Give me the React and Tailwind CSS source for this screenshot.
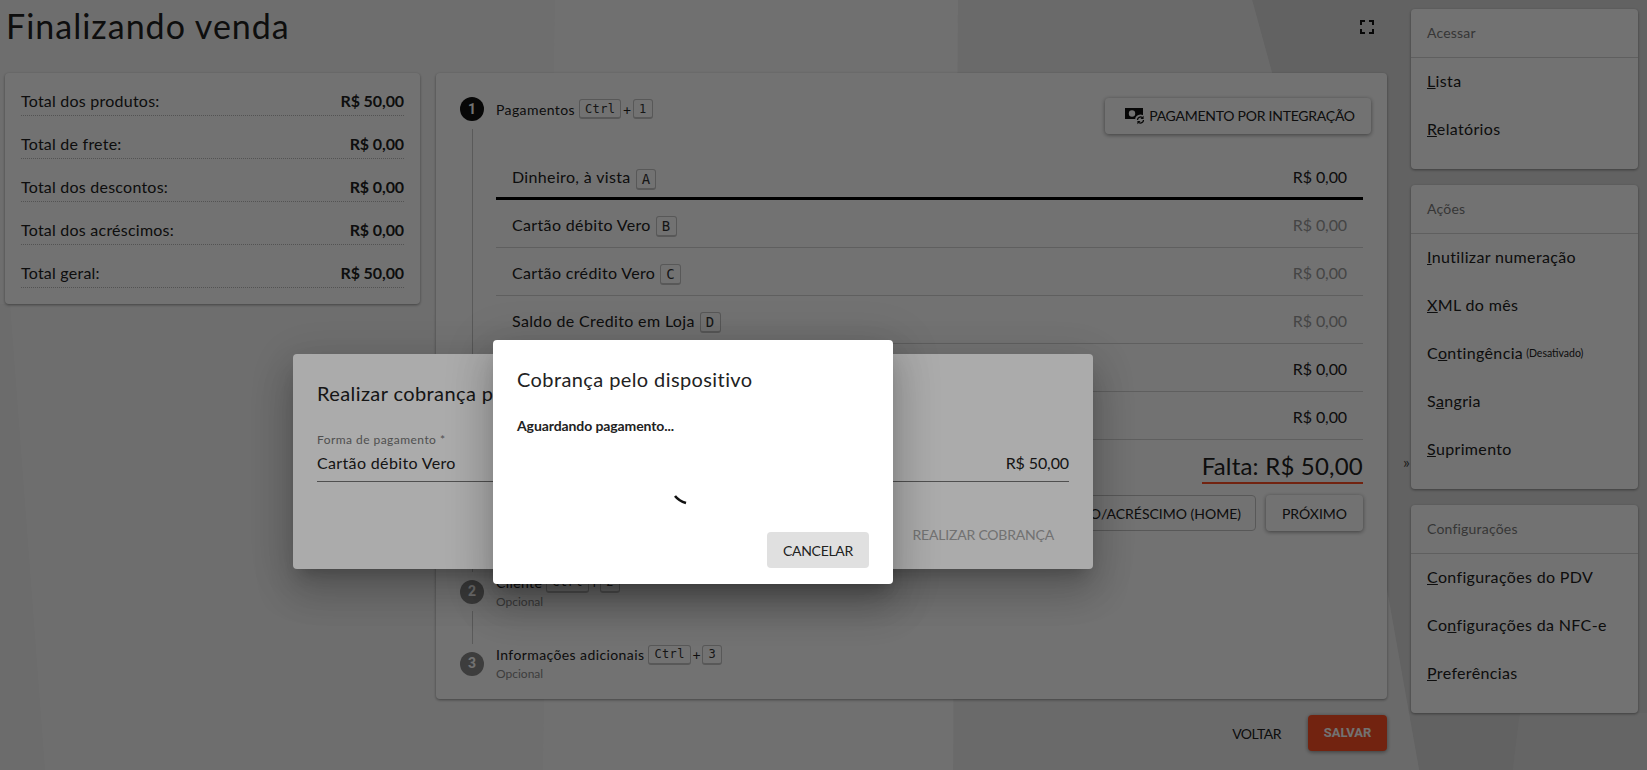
const sans = { fontFamily: 'Lato, "Noto Sans", sans-serif' };

const summary = [
  ['Total dos produtos:', 'R$ 50,00'],
  ['Total de frete:', 'R$ 0,00'],
  ['Total dos descontos:', 'R$ 0,00'],
  ['Total dos acréscimos:', 'R$ 0,00'],
  ['Total geral:', 'R$ 50,00'],
];

const payments = [
  { label: 'Dinheiro, à vista', key: 'A', active: true },
  { label: 'Cartão débito Vero', key: 'B', muted: true },
  { label: 'Cartão crédito Vero', key: 'C', muted: true },
  { label: 'Saldo de Credito em Loja', key: 'D', muted: true },
  {},
  {},
];

const menus = [
  {
    title: 'Acessar',
    pad: 'pb-[15px]',
    items: [['', 'L', 'ista'], ['', 'R', 'elatórios']],
  },
  {
    title: 'Ações',
    pad: 'pb-[15px]',
    items: [
      ['', 'I', 'nutilizar numeração'],
      ['', 'X', 'ML do mês'],
      ['C', 'o', 'ntingência', '(Desativado)'],
      ['S', 'a', 'ngria'],
      ['', 'S', 'uprimento'],
    ],
  },
  {
    title: 'Configurações',
    pad: 'pb-[15px]',
    items: [
      ['', 'C', 'onfigurações do PDV'],
      ['Co', 'n', 'figurações da NFC-e'],
      ['', 'P', 'referências'],
    ],
  },
];

function Kbd({ children, large }) {
  return (
    <kbd className={`inline-flex items-center rounded-[3px] border border-b-2 border-[#c4c4c4] px-[5px] leading-none text-[#333] ${large ? 'mt-[4px] h-[21px] text-[14px]' : 'h-[20px] text-[12px]'}`} style={{ fontFamily: '"DejaVu Sans Mono", monospace' }}>
      {children}
    </kbd>
  );
}

function StepLabel({ label, keyName }) {
  return (
    <div className="flex items-center gap-[3px] text-[14px] tracking-[0.4px] text-[#222]">
      <span className="mr-px">{label}</span>
      <Kbd>Ctrl</Kbd>
      <span className="-mx-[1.5px]">+</span>
      <Kbd>{keyName}</Kbd>
    </div>
  );
}

function StepCircle({ n, active }) {
  return (
    <div className={`flex h-6 w-6 shrink-0 items-center justify-center rounded-full text-[14px] font-bold text-white ${active ? 'bg-[#111]' : 'bg-[#888]'}`} style={{ fontFamily: 'Roboto, sans-serif' }}>
      {n}
    </div>
  );
}

function Summary() {
  return (
    <div className="h-[231px] w-[415px] shrink-0 rounded bg-white px-4 pt-4 shadow-[0_1px_3px_rgba(0,0,0,0.4)]">
      {summary.map(([label, value]) => (
        <div key={label} className="mb-4 flex h-[27px] items-center justify-between border-b border-dotted border-[#bbb] pb-[2px] text-[16px] text-[#222]">
          <span className="tracking-[0.23px]">{label}</span>
          <span className="font-bold tracking-[-0.1px] text-[#222]">{value}</span>
        </div>
      ))}
    </div>
  );
}

function PaymentRow({ row }) {
  return (
    <div className={`flex h-12 items-center justify-between px-4 pt-[2px] text-[16px] ${row.active ? 'shadow-[inset_0_-3px_0_#000]' : 'border-b border-[#d4d4d4]'}`}>
      <div className="flex items-center gap-[5px] tracking-[0.35px] text-[#222]">
        {row.label && <span>{row.label}</span>}
        {row.key && <Kbd large>{row.key}</Kbd>}
      </div>
      <span className={`tracking-[-0.1px] ${row.muted ? 'text-[#9a9a9a]' : 'text-[#222]'}`}>R$ 0,00</span>
    </div>
  );
}

function MainCard() {
  return (
    <div className="h-[626px] w-[951px] rounded bg-white pl-6 pr-4 pt-6 shadow-[0_1px_3px_rgba(0,0,0,0.4)]">
      <div className="flex h-6 justify-between">
        <div className="flex gap-3">
          <StepCircle n="1" active />
          <StepLabel label="Pagamentos" keyName="1" />
        </div>
        <button className="mt-px flex h-9 w-[266px] items-center justify-center gap-[3px] rounded bg-white pb-[2px] pl-[3px] text-[14px] tracking-[-0.25px] text-[#222] shadow-[0_1px_4px_rgba(0,0,0,0.45)]">
          <svg width="22" height="20" viewBox="0 0 22 20">
            <rect x="1" y="3" width="18" height="11" fill="#111" />
            <circle cx="8" cy="8.5" r="3.2" fill="#fff" />
            <circle cx="16.5" cy="15" r="5.5" fill="#fff" />
            <path fill="none" stroke="#111" strokeWidth="1.3" d="M13.5 15a3 3 0 0 1 4.8-2.4M19.5 15a3 3 0 0 1-4.8 2.4" />
            <path fill="#111" d="M19.6 10.8v3.2h-3.2zM13.4 19.2V16h3.2z" />
          </svg>
          PAGAMENTO POR INTEGRAÇÃO
        </button>
      </div>

      <div className="ml-3 mr-2 mt-2 h-[443px] border-l border-[#c8c8c8] pl-[23px] pt-[23px]">
        {payments.map((row, i) => (
          <PaymentRow key={i} row={row} />
        ))}
        <div className="flex justify-end">
          <div className="mt-[9px] border-b-2 border-[#ff5024] text-[24px] leading-[33px] tracking-[0.2px] text-[#222]">Falta: R$ 50,00</div>
        </div>
        <div className="mt-[11px] flex justify-end gap-[10px] text-[14px] text-[#222]">
          <button className="flex h-9 items-center rounded border border-[#c4c4c4] pl-4 pr-[14px]">DESCONTO/ACRÉSCIMO (HOME)</button>
          <button className="flex h-9 w-[97px] items-center justify-center rounded bg-white shadow-[0_1px_4px_rgba(0,0,0,0.45)]">PRÓXIMO</button>
        </div>
      </div>

      <div className="flex h-[39px] items-center gap-3">
        <StepCircle n="2" />
        <div>
          <StepLabel label="Cliente" keyName="2" />
          <div className="text-[12px] leading-[18px] text-[#8a8a8a]">Opcional</div>
        </div>
      </div>
      <div className="ml-3 h-[33px] border-l border-[#c8c8c8]" />
      <div className="flex h-[39px] items-center gap-3">
        <StepCircle n="3" />
        <div>
          <StepLabel label="Informações adicionais" keyName="3" />
          <div className="text-[12px] leading-[18px] text-[#8a8a8a]">Opcional</div>
        </div>
      </div>
    </div>
  );
}

function SideMenu({ menu }) {
  return (
    <div className={`rounded bg-white shadow-[0_1px_3px_rgba(0,0,0,0.4)] ${menu.pad}`}>
      <div className="flex h-[49px] items-center border-b border-[#d4d4d4] px-4 pb-[2px] text-[14px] tracking-[0.2px] text-[#7a7a7a]">{menu.title}</div>
      {menu.items.map(([before, letter, after, note]) => (
        <div key={before + letter + after} className="flex h-12 items-center px-4 pb-[2px] text-[16px] tracking-[0.35px] text-[#222]">
          <span>
            {before}
            <u>{letter}</u>
            {after}
          </span>
          {note && <span className="ml-[3px] mt-[2px] text-[10.5px] tracking-normal">{note}</span>}
        </div>
      ))}
    </div>
  );
}

function Background() {
  return (
    <svg className="absolute inset-0 h-full w-full" viewBox="0 0 1647 770" preserveAspectRatio="none">
      <rect width="1647" height="770" fill="#f6f6f6" />
      <polygon points="555,0 958,0 953,770 543,770" fill="#fafafa" />
      <polygon points="958,0 1252,0 1272,73 1387,590 1419,770 953,770" fill="#eeeeee" />
      <polygon points="1252,0 1647,0 1647,770 1419,770 1387,590 1272,73" fill="#dcdcdc" />
      <polygon points="1520,713 1647,713 1647,770 1513,770" fill="#e2e2e2" />
      <polygon points="0,304 10,304 45,770 0,770" fill="#f0f0f0" />
    </svg>
  );
}

export default function App() {
  return (
    <div className="relative h-[770px] w-full overflow-hidden" style={sans}>
      <Background />

      <div className="relative flex">
        <div className="w-[1387px] shrink-0 pl-[5px]">
          <div className="flex h-[73px] items-start justify-between">
            <h1 className="ml-px mt-[4px] text-[34px] font-normal leading-[44px] tracking-[1px] text-[#222]">Finalizando venda</h1>
            <button className="mr-2 mt-[15px] text-[#111]">
              <svg width="24" height="24" viewBox="0 0 24 24" fill="currentColor">
                <path d="M7 14H5v5h5v-2H7v-3zm-2-4h2V7h3V5H5v5zm12 7h-3v2h5v-5h-2v3zM14 5v2h3v3h2V5h-5z" />
              </svg>
            </button>
          </div>
          <div className="flex gap-4">
            <Summary />
            <MainCard />
          </div>
          <div className="mt-4 flex items-center justify-end gap-[27px] text-[14px]">
            <span className="tracking-[-0.5px] text-[#222]">VOLTAR</span>
            <button className="h-9 w-[79px] rounded bg-[#ff5024] text-[13px] font-bold text-white shadow-[0_1px_4px_rgba(0,0,0,0.45)]" style={{ fontFamily: 'Roboto, sans-serif' }}>SALVAR</button>
          </div>
        </div>

        <div className="ml-[16px] mt-[452px] h-fit w-2 text-[16px] leading-5 text-[#444]">»</div>

        <div className="absolute left-[1411px] top-[9px] flex w-[227px] flex-col gap-4">
          {menus.map((menu) => (
            <SideMenu key={menu.title} menu={menu} />
          ))}
        </div>
      </div>

      {/* primeiro backdrop + dialogo de cobranca */}
      <div className="absolute inset-0 flex bg-black/33">
        <div className="absolute left-[293px] top-[354px] h-[215px] w-[800px] rounded bg-white px-6 pt-[25px] shadow-[0_11px_15px_-7px_rgba(0,0,0,0.2),0_24px_38px_3px_rgba(0,0,0,0.14),0_9px_46px_8px_rgba(0,0,0,0.12)]">
          <div className="text-[20px] leading-[28px] tracking-[0.4px] text-[#222]">Realizar cobrança pelo dispositivo</div>
          <div className="mt-[25px] text-[12px] leading-[16px] tracking-[0.45px] text-[#777]">Forma de pagamento *</div>
          <div className="flex h-[34px] items-center justify-between border-b border-[#777] pb-[4px] text-[16px] text-[#222]">
            <span className="tracking-[0.35px]">Cartão débito Vero</span>
            <span className="tracking-[-0.1px]">R$ 50,00</span>
          </div>
          <div className="mt-[42px] flex justify-end pr-[15px] text-[14px] tracking-[-0.2px] text-[#aaa]">REALIZAR COBRANÇA</div>
        </div>
      </div>

      {/* segundo backdrop + aguardando dispositivo */}
      <div className="absolute inset-0 bg-black/33">
        <div className="absolute left-[493px] top-[340px] flex h-[244px] w-[400px] flex-col rounded bg-white px-6 pt-[25px] shadow-[0_11px_15px_-7px_rgba(0,0,0,0.2),0_24px_38px_3px_rgba(0,0,0,0.14),0_9px_46px_8px_rgba(0,0,0,0.12)]">
          <div className="text-[20px] leading-[28px] tracking-[0.4px] text-[#222]">Cobrança pelo dispositivo</div>
          <div className="mt-[24px] text-[14px] font-bold leading-[18px] tracking-[-0.1px] text-[#222]">Aguardando pagamento...</div>
          <div className="mt-[59px] flex justify-center">
            <svg width="16" height="12" viewBox="0 0 16 12" className="mr-6">
              <path d="M2 2q4 5 11 7" fill="none" stroke="#111" strokeWidth="2.6" />
            </svg>
          </div>
          <div className="mt-[26px] flex justify-end">
            <button className="h-9 w-[102px] rounded bg-[#e0e0e0] text-[14px] tracking-[-0.3px] text-[#222]">CANCELAR</button>
          </div>
        </div>
      </div>
    </div>
  );
}
